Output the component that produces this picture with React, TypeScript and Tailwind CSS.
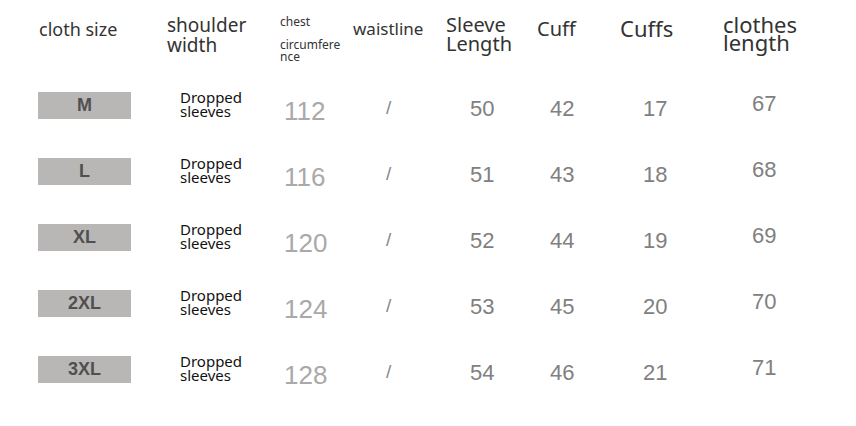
import React from 'react';

const rows = [
  { size: 'M', chest: 112, sleeve: 50, cuff: 42, cuffs: 17, length: 67 },
  { size: 'L', chest: 116, sleeve: 51, cuff: 43, cuffs: 18, length: 68 },
  { size: 'XL', chest: 120, sleeve: 52, cuff: 44, cuffs: 19, length: 69 },
  { size: '2XL', chest: 124, sleeve: 53, cuff: 45, cuffs: 20, length: 70 },
  { size: '3XL', chest: 128, sleeve: 54, cuff: 46, cuffs: 21, length: 71 },
];

const cols = 'grid grid-cols-[129px_113px_73px_93px_91px_83px_103px_1fr]';
const noto = "font-['Noto_Sans',sans-serif]";
const arial = "font-['Liberation_Sans',Arial,sans-serif]";

export default function App() {
  return (
    <div className="w-[856px] h-[426px] bg-white pl-[38px] text-[#333]">
      {/* header */}
      <div className={`${cols} h-[92px] items-start ${noto}`}>
        <div className="mt-[20px] ml-[1px] text-[18px] leading-[18px]">cloth size</div>
        <div className="mt-[15px] text-[19px] leading-[20px]">
          shoulder
          <br />
          width
        </div>
        <div className="text-[12px] leading-[12px]">
          <div className="mt-[16px]">chest</div>
          <div className="mt-[11px]">
            circumfere
            <br />
            nce
          </div>
        </div>
        <div className="mt-[20px] text-[17px] leading-[17px]">waistline</div>
        <div className="mt-[15px] text-[20px] leading-[19px]">
          Sleeve
          <br />
          Length
        </div>
        <div className="mt-[19px] text-[20px] leading-[20px]">Cuff</div>
        <div className="mt-[17px] text-[22px] leading-[22px]">Cuffs</div>
        <div className="mt-[15px] text-[22px] leading-[18px]">
          clothes
          <br />
          length
        </div>
      </div>

      {/* rows */}
      {rows.map(r => (
        <div key={r.size} className={`${cols} h-[66px] items-start`}>
          <div className={`w-[93px] h-[27px] bg-[#b9b6b6] flex items-center justify-center text-[18px] font-bold text-[#505050] ${arial}`}>
            {r.size}
          </div>
          <div className={`ml-[13px] -mt-[2px] text-[15px] leading-[14px] text-[#111] ${noto}`}>
            Dropped
            <br />
            sleeves
          </div>
          <div className={`ml-[4px] mt-[6px] text-[26px] leading-[26px] text-[#a9a9a9] ${arial}`}>{r.chest}</div>
          <div className={`ml-[33px] mt-[6px] text-[19px] leading-[19px] text-[#888] ${arial}`}>/</div>
          <div className={`ml-[24px] mt-[6px] text-[22px] leading-[22px] text-[#808080] ${arial}`}>{r.sleeve}</div>
          <div className={`ml-[13px] mt-[6px] text-[22px] leading-[22px] text-[#808080] ${arial}`}>{r.cuff}</div>
          <div className={`ml-[23px] mt-[6px] text-[22px] leading-[22px] text-[#808080] ${arial}`}>{r.cuffs}</div>
          <div className={`ml-[29px] mt-[1px] text-[22px] leading-[22px] text-[#808080] ${arial}`}>{r.length}</div>
        </div>
      ))}
    </div>
  );
}
